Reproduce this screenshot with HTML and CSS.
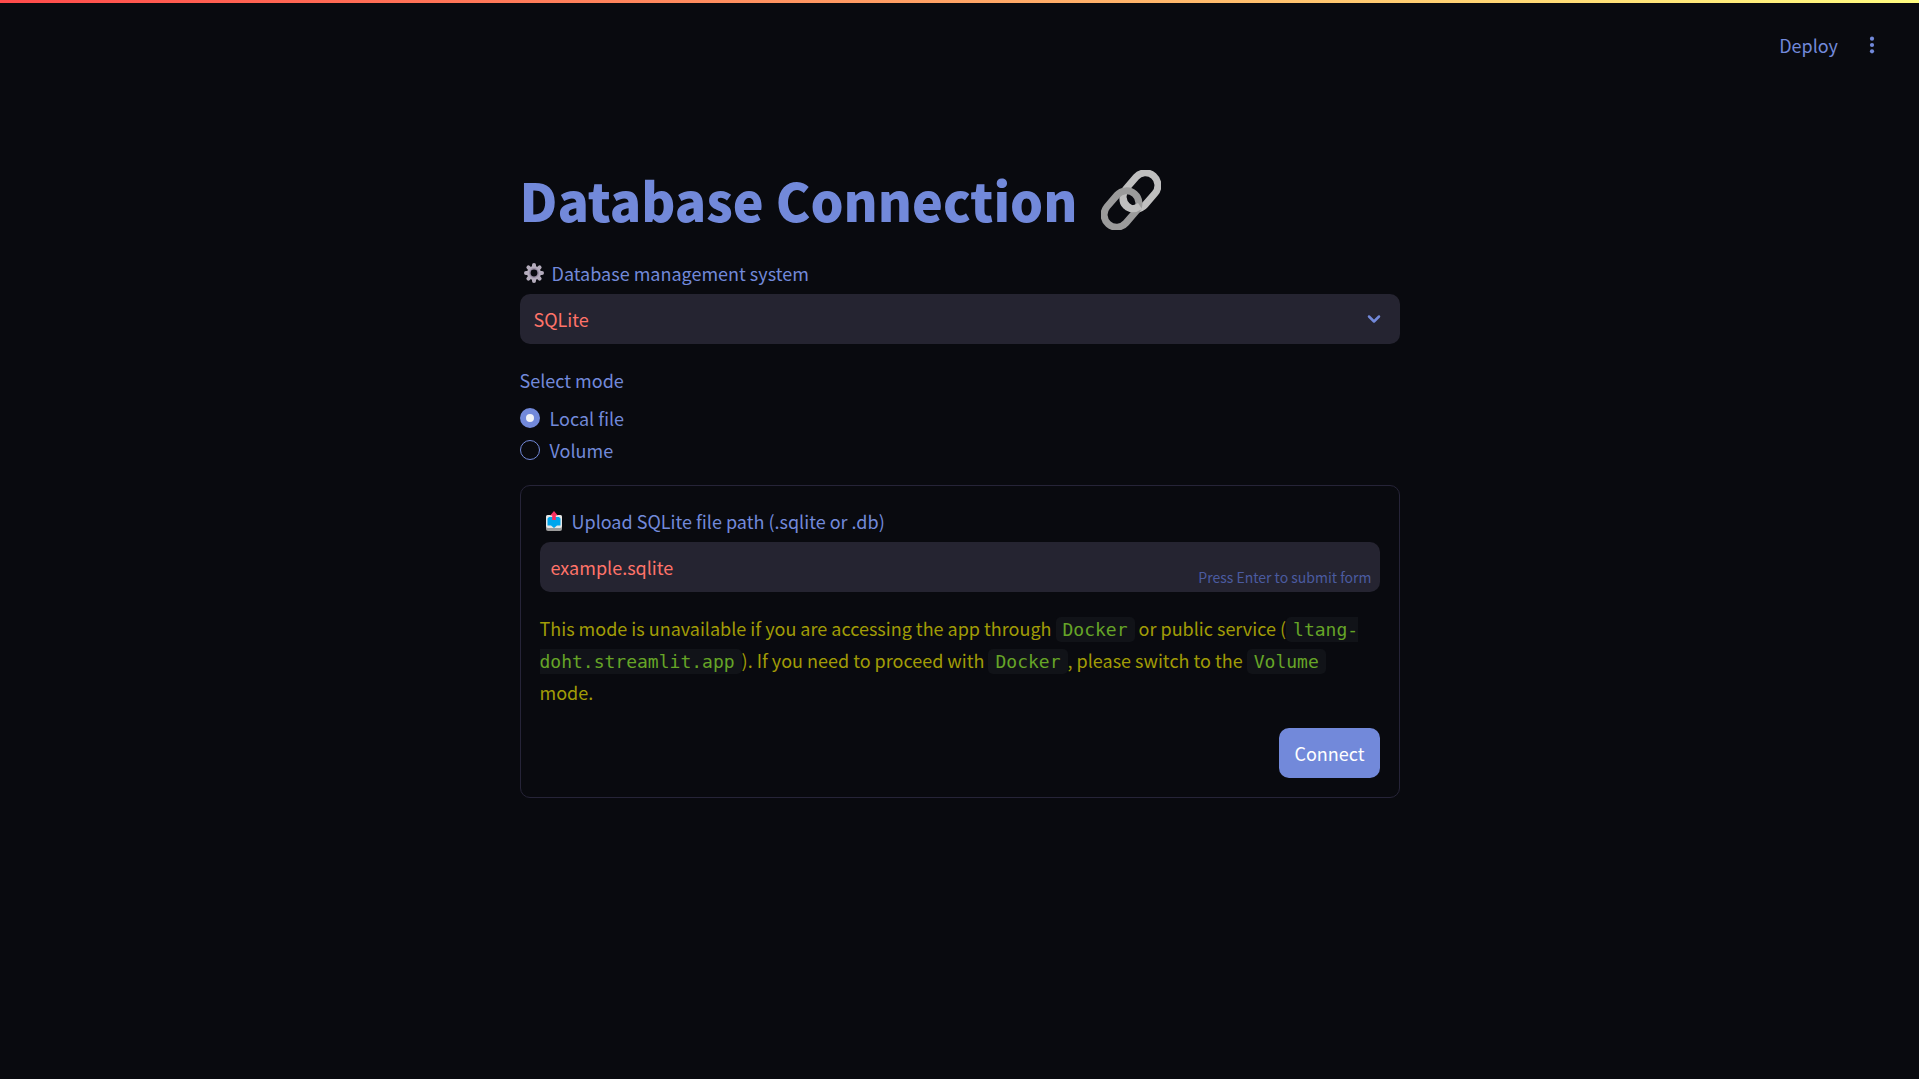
FILE: index.html
```html
<!DOCTYPE html>
<html lang="en">
<head>
<meta charset="utf-8">
<meta name="viewport" content="width=device-width, initial-scale=1">
<title>Database Connection</title>
<link rel="stylesheet" href="styles.css">
</head>
<body>
<div class="decoration"></div>
<header class="toolbar">
  <button class="deploy" type="button">Deploy</button>
  <button class="menu" type="button" aria-label="Main menu">
    <svg width="20" height="20" viewBox="0 0 20 20" fill="currentColor"><circle cx="10" cy="3.7" r="2.1"/><circle cx="10" cy="10" r="2.1"/><circle cx="10" cy="16.3" r="2.1"/></svg>
  </button>
</header>
<main class="content">
  <h1 class="title">
    <span>Database Connection</span>
    <svg class="link-icon" viewBox="0 0 60 60" fill="none" stroke-width="7" aria-hidden="true">
      <rect x="-12.5" y="-20" width="25" height="40" rx="12.5" stroke="#bfbfbf" transform="translate(39.5 21) rotate(41)"/>
      <rect x="-12.5" y="-20" width="25" height="40" rx="12.5" stroke="#9b9b9b" transform="translate(20.5 39) rotate(41)"/>
      <path d="M22 28Q21.500 33 25 36Q31 41.500 39 36" stroke="#bfbfbf"/>
    </svg>
  </h1>

  <div class="field">
    <label class="label with-icon" for="dbms">
      <svg class="emoji" viewBox="0 0 20 20" aria-hidden="true">
        <g stroke="#b4acbc" stroke-width="4" stroke-linecap="round"><path d="M10 2v16M2 10h16M4.400 4.400l11.200 11.200M15.600 4.400L4.400 15.600"/></g>
        <circle cx="10" cy="10" r="7" fill="#b4acbc"/><circle cx="10" cy="10" r="4.200" fill="#090a0f" stroke="#998ea4" stroke-width="1.500"/>
      </svg>
      Database management system
    </label>
    <div class="select-wrap">
      <select class="control select" id="dbms"><option>SQLite</option></select>
      <svg class="chevron" viewBox="0 0 20 20" fill="none" stroke="currentColor" stroke-width="2.500" stroke-linecap="round" stroke-linejoin="round" aria-hidden="true"><path d="M5 7.500l5 5 5-5"/></svg>
    </div>
  </div>

  <fieldset class="modes">
    <legend class="label">Select mode</legend>
    <label class="mode"><input type="radio" name="mode" checked>Local file</label>
    <label class="mode"><input type="radio" name="mode">Volume</label>
  </fieldset>

  <form class="card">
    <div class="field">
      <label class="label with-icon" for="path">
        <svg class="emoji" viewBox="0 0 20 20" aria-hidden="true">
          <rect x="2" y="4" width="16" height="16" rx="2" fill="#9b9b9b"/><rect x="2" y="4" width="16" height="13" rx="2" fill="#e6e6e6"/>
          <path d="M5 6h10l1.500 1.500v7H13L10 17l-3-2.500H3.500v-7z" fill="#00a6ed"/>
          <path d="M10 0l3.800 4.500h-2V9H8.200V4.500h-2z" fill="#f92f60"/>
        </svg>
        Upload SQLite file path (.sqlite or .db)
      </label>
      <div class="input-wrap">
        <input class="control input" id="path" type="text" value="example.sqlite">
        <span class="hint">Press Enter to submit form</span>
      </div>
    </div>
    <p class="notice">This mode is unavailable if you are accessing the app through <code>Docker</code> or public service (<code>ltang-doht.streamlit.app</code>). If you need to proceed with <code>Docker</code>, please switch to the <code>Volume</code> mode.</p>
    <button class="connect" type="submit">Connect</button>
  </form>
</main>
</body>
</html>
```

FILE: styles.css
```css
* { box-sizing: border-box; }

body {
  margin: 0;
  min-height: 100vh;
  background: #090a0f;
  color: #7289da;
  font: 18px/32px "Noto Sans CJK SC", "Noto Sans", sans-serif;
}

button, input, select { font: inherit; }

.decoration {
  height: 3px;
  background: linear-gradient(90deg, #ff4b4b, #fffd80);
}

.toolbar {
  display: flex;
  justify-content: flex-end;
  align-items: center;
  gap: 24px;
  height: 83px;
  padding: 0 37px;
}

.deploy, .menu {
  padding: 0;
  border: 0;
  background: none;
  color: inherit;
}

.menu { display: flex; }

.content {
  width: 100%;
  max-width: 920px;
  margin: 0 auto;
  padding: 78px 20px;
}

.title {
  display: flex;
  align-items: center;
  gap: 24px;
  margin: 0 0 22px;
  font-size: 52px;
  line-height: 72px;
  font-weight: 900;
}

.link-icon { width: 60px; height: 60px; }

.field {
  display: flex;
  flex-direction: column;
  gap: 6px;
}

.label {
  padding: 0;
  line-height: 30px;
}

.with-icon {
  display: flex;
  align-items: center;
  gap: 8px;
  padding-left: 4px;
}

.emoji { width: 20px; height: 20px; }

.select-wrap, .input-wrap { position: relative; }

.control {
  display: block;
  width: 100%;
  height: 50px;
  border: 0;
  border-radius: 10px;
  outline: 0;
  background: #252431;
  color: #ff7369;
}

.select {
  appearance: none;
  padding: 0 14px;
}

.input { padding: 0 11px; }

.chevron {
  position: absolute;
  top: 15px;
  right: 16px;
  width: 20px;
  height: 20px;
  pointer-events: none;
}

.hint {
  position: absolute;
  right: 8px;
  bottom: 5px;
  color: #4b5ba0;
  font-size: 14px;
  line-height: 20px;
}

.modes {
  margin: 21px 0 19px;
  padding: 0;
  border: 0;
}

.modes .label { margin-bottom: 7px; }

.mode {
  display: flex;
  align-items: center;
  gap: 10px;
}

.mode input {
  appearance: none;
  width: 20px;
  height: 20px;
  margin: 0;
  border: 1px solid #7289da;
  border-radius: 50%;
}

.mode input:checked {
  border-width: 6px;
  background: #f0f2f6;
}

.card {
  display: flex;
  flex-direction: column;
  gap: 20px;
  padding: 20px 19px 19px;
  border: 1px solid #262438;
  border-radius: 10px;
}

.notice {
  margin: 0;
  color: #a19c06;
}

.notice code {
  padding: 2px 7px;
  border-radius: 5px;
  background: #111318;
  color: #66a527;
  font-family: "DejaVu Sans Mono", monospace;
  font-size: 18px;
  line-height: 20px;
}

.connect {
  align-self: flex-end;
  height: 50px;
  padding: 0 15px;
  border: 0;
  border-radius: 10px;
  background: #7289da;
  color: #fff;
}
```
